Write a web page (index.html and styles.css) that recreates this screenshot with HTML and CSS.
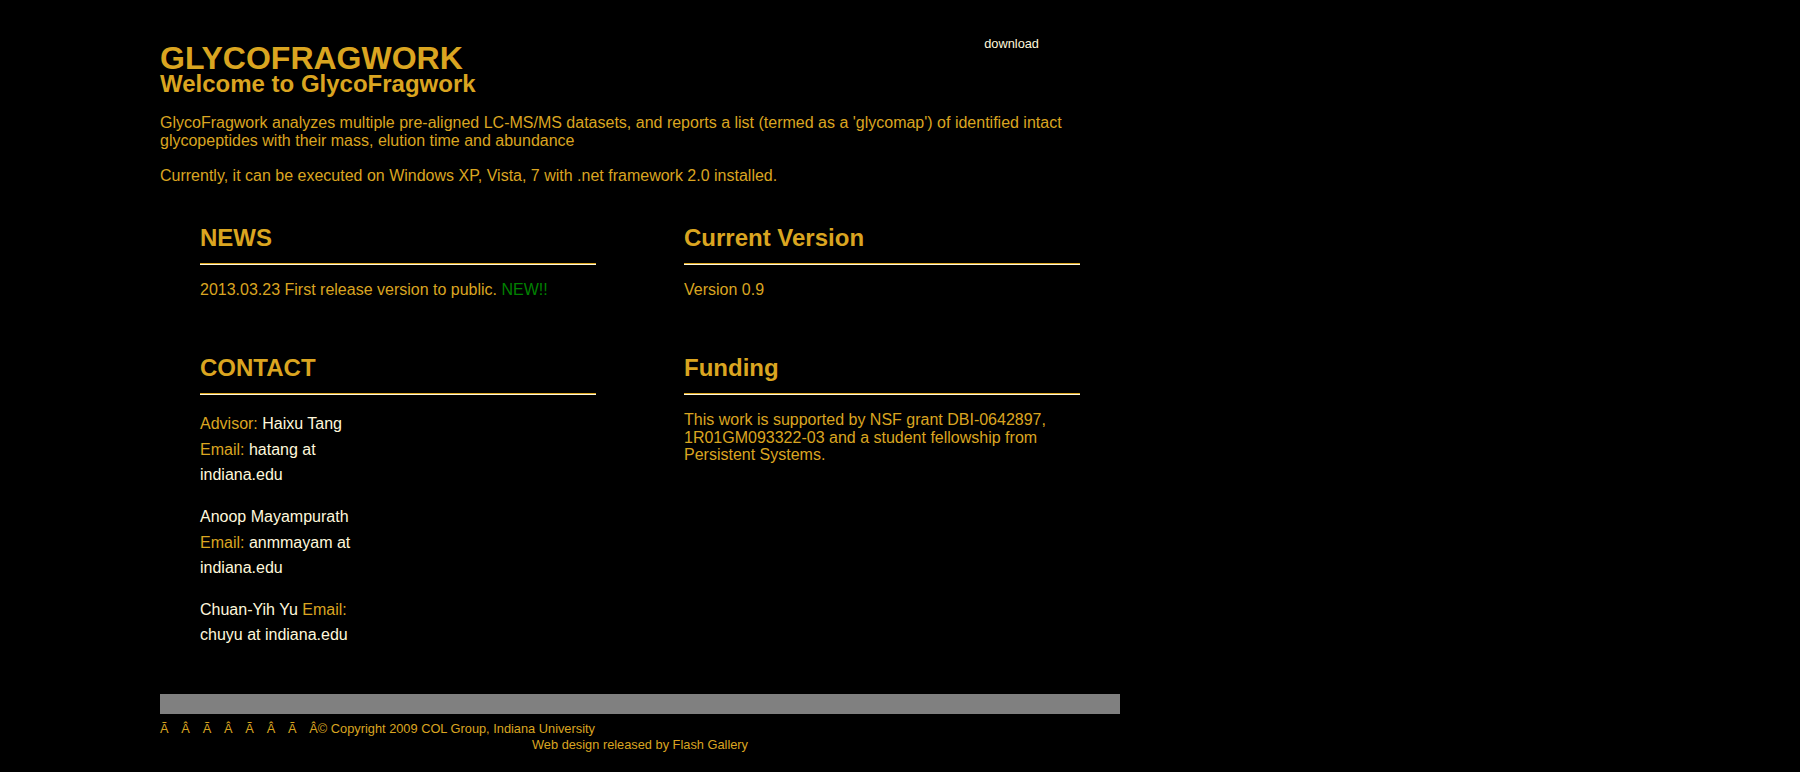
FILE: index.html
```html
<!DOCTYPE html>
<html lang="en">
<head>
<meta charset="utf-8">
<title>GlycoFragwork</title>
<link rel="stylesheet" href="styles.css">
</head>
<body>
<div class="page">
  <header class="masthead">
    <div class="brand">
      <h1 class="site-title">GLYCOFRAGWORK</h1>
      <h2 class="welcome">Welcome to GlycoFragwork</h2>
    </div>
    <nav class="menu"><a class="menu-link" href="#">download</a></nav>
  </header>

  <div class="intro">
    <p class="intro-text">GlycoFragwork analyzes multiple pre-aligned LC-MS/MS datasets, and reports a list (termed as a 'glycomap') of identified intact glycopeptides with their mass, elution time and abundance</p>
    <p class="intro-text">Currently, it can be executed on Windows XP, Vista, 7 with .net framework 2.0 installed.</p>
  </div>

  <div class="sections">
    <section class="block">
      <h3 class="block-title">NEWS</h3>
      <hr class="rule">
      <div class="block-body">2013.03.23 First release version to public. <span class="new">NEW!!</span></div>
    </section>
    <section class="block">
      <h3 class="block-title">Current Version</h3>
      <hr class="rule">
      <div class="block-body">Version 0.9</div>
    </section>
    <section class="block">
      <h3 class="block-title">CONTACT</h3>
      <hr class="rule">
      <div class="contact">
        <p class="person">Advisor: <span class="name">Haixu Tang</span> Email: <span class="name">hatang at</span> <span class="name">indiana.edu</span></p>
        <p class="person"><span class="name">Anoop Mayampurath</span> Email: <span class="name">anmmayam at</span> <span class="name">indiana.edu</span></p>
        <p class="person"><span class="name">Chuan-Yih Yu</span> Email: <span class="name">chuyu at indiana.edu</span></p>
      </div>
    </section>
    <section class="block">
      <h3 class="block-title">Funding</h3>
      <hr class="rule">
      <div class="block-body">This work is supported by NSF grant DBI-0642897, 1R01GM093322-03 and a student fellowship from Persistent Systems.</div>
    </section>
  </div>

  <div class="bar"></div>
  <footer class="footer">
    <div class="copy"><span class="moj">Ã</span><span class="moj">Â</span><span class="moj">Ã</span><span class="moj">Â</span><span class="moj">Ã</span><span class="moj">Â</span><span class="moj">Ã</span>Â© Copyright 2009 COL Group, Indiana University</div>
    <div class="credit">Web design released by Flash Gallery</div>
  </footer>
</div>
</body>
</html>
```

FILE: styles.css
```css
html, body {
  margin: 0;
  padding: 0;
  background: #000;
}

body {
  font-family: "Liberation Sans", Arial, sans-serif;
  font-size: 16px;
  color: #daa520;
}

.page {
  width: 960px;
  margin-left: 160px;
}

.masthead {
  display: flex;
  align-items: flex-start;
  padding-top: 36px;
}

.brand {
  flex: 1;
}

.site-title {
  margin: 8px 0 0;
  font-size: 32px;
  line-height: 28px;
  font-weight: bold;
  color: #daa520;
}

.welcome {
  margin: 0;
  font-size: 24px;
  line-height: 24px;
  font-weight: bold;
  color: #daa520;
}

.menu {
  margin-top: -2px;
  padding-right: 81px;
}

.menu-link {
  font-size: 12.8px;
  line-height: 15px;
  color: #fff8dc;
  text-decoration: none;
}

.intro {
  padding-top: 18px;
}

.intro-text {
  margin: 0;
  line-height: 18.4px;
}

.intro-text + .intro-text {
  margin-top: 16px;
}

.sections {
  margin-top: 38px;
  padding: 0 40px;
  display: grid;
  grid-template-columns: 396px 396px;
  column-gap: 88px;
  row-gap: 54.5px;
  align-items: start;
}

.block-title {
  margin: 0;
  font-size: 24px;
  line-height: 30px;
  font-weight: bold;
  color: #daa520;
}

.rule {
  height: 0;
  margin: 10px 0 0;
  border: 0;
  border-top: 1px solid #daa520;
  border-bottom: 1px solid #fff8dc;
}

.block-body {
  margin-top: 16px;
  line-height: 17.5px;
}

.new {
  color: #008000;
}

.contact {
  margin-top: 16px;
  width: 170px;
}

.person {
  margin: 0;
  line-height: 25.6px;
}

.person + .person {
  margin-top: 16px;
}

.name {
  color: #fff8dc;
}

.bar {
  margin-top: 46px;
  height: 20px;
  background: #808080;
}

.footer {
  margin-top: 7px;
  font-size: 12.8px;
  line-height: 16px;
  color: #daa520;
}

.moj {
  display: inline-block;
  width: 21.33px;
}

.credit {
  text-align: center;
}
```
